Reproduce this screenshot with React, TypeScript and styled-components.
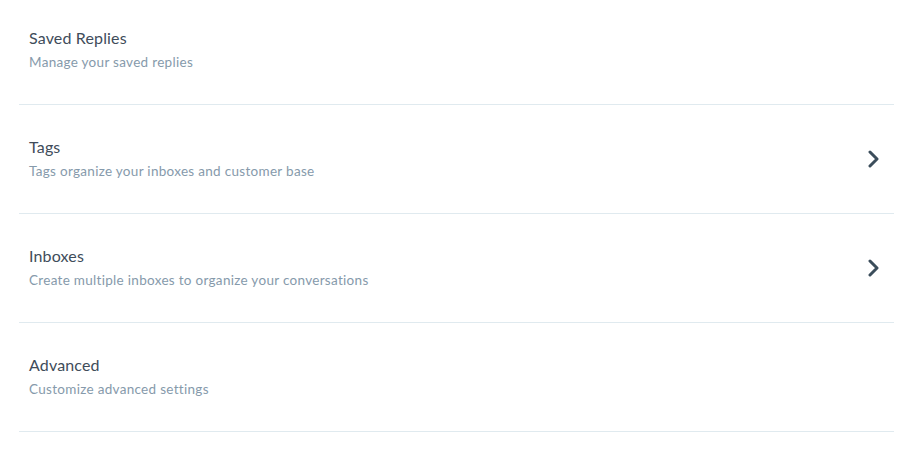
import React from 'react';
import styled, { createGlobalStyle } from 'styled-components';

const GlobalStyle = createGlobalStyle`
  html, body {
    margin: 0;
    padding: 0;
    background: #ffffff;
  }
  body {
    font-family: Lato, "Open Sans", "Liberation Sans", sans-serif;
    -webkit-font-smoothing: antialiased;
  }
`;

const List = styled.ul`
  list-style: none;
  margin: -4px 0 0;
  padding: 0 22px 0 19px;
`;

const Row = styled.li<{ $link?: boolean }>`
  display: flex;
  align-items: center;
  justify-content: space-between;
  padding: 32px 10px 33px;
  border-bottom: 1px solid #e0eaef;
  cursor: ${(p) => (p.$link ? 'pointer' : 'default')};
`;

const Text = styled.div`
  display: flex;
  flex-direction: column;
  gap: 5px;
`;

const Title = styled.span`
  font-size: 16px;
  line-height: 20px;
  color: #404c5a;
  letter-spacing: 0.15px;
`;

const Subtitle = styled.span`
  font-size: 13.5px;
  line-height: 18px;
  color: #869aab;
  letter-spacing: 0.3px;
`;

const Chevron = styled.svg`
  width: 14px;
  height: 18px;
  margin-right: 3px;
  flex-shrink: 0;
`;

type Item = { title: string; subtitle: string; link?: boolean };

const items: Item[] = [
  { title: 'Saved Replies', subtitle: 'Manage your saved replies' },
  { title: 'Tags', subtitle: 'Tags organize your inboxes and customer base', link: true },
  { title: 'Inboxes', subtitle: 'Create multiple inboxes to organize your conversations', link: true },
  { title: 'Advanced', subtitle: 'Customize advanced settings' },
];

const App: React.FC = () => {
  return (
    <>
      <GlobalStyle />
      <List>
        {items.map((item) => (
          <Row key={item.title} $link={item.link}>
            <Text>
              <Title>{item.title}</Title>
              <Subtitle>{item.subtitle}</Subtitle>
            </Text>
            {item.link && (
              <Chevron viewBox="0 0 14 18">
                <path d="M3 2 L10 9 L3 16" fill="none" stroke="#3b4d5b" strokeWidth="3" strokeLinecap="round" strokeLinejoin="round" />
              </Chevron>
            )}
          </Row>
        ))}
      </List>
    </>
  );
};

export default App;
